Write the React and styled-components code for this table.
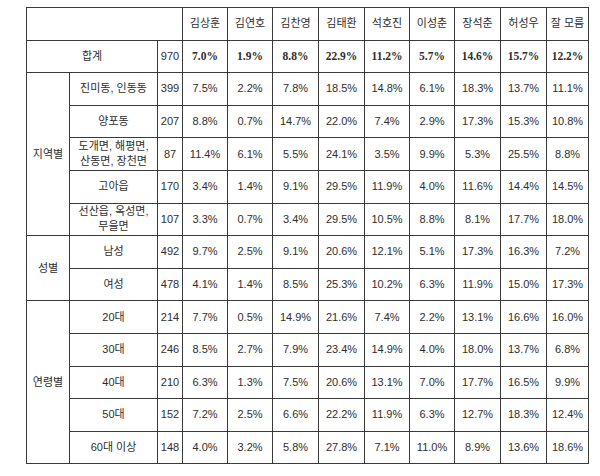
import React from "react";
import styled, { createGlobalStyle } from "styled-components";

const Global = createGlobalStyle`
  html, body { margin: 0; padding: 0; background: #fff; }
  body { font-family: "Liberation Sans", "Noto Sans CJK KR", sans-serif; }
`;

const Page = styled.div`
  width: 600px;
  height: 476px;
  padding: 7px 0 0 26px;
  box-sizing: border-box;
  background: #fff;
`;

const Table = styled.table`
  width: 562px;
  table-layout: fixed;
  border-collapse: collapse;
  color: #2e2e2e;
  font-family: "Liberation Sans", "Noto Sans CJK KR", sans-serif;
  font-size: 11px;
`;

const Cell = styled.td`
  border: 1px solid #3a3a3a;
  height: 31.6px;
  padding: 0;
  text-align: center;
  vertical-align: middle;
  line-height: 15px;
  white-space: nowrap;
  font-weight: ${(p) => (p.$bold ? 700 : 400)};
  font-family: ${(p) =>
    p.$bold
      ? `"Liberation Serif", "Noto Sans CJK KR", serif`
      : `"Liberation Sans", "Noto Sans CJK KR", sans-serif`};
  font-size: ${(p) => (p.$bold ? "11.5px" : "11px")};
`;

const widths = [43, 88, 25, 45, 45, 46, 46, 45, 45, 46, 46, 42];
const names = ["김상훈", "김연호", "김찬영", "김태환", "석호진", "이성춘", "장석춘", "허성우", "잘 모름"];

const groups = [
  {
    label: "지역별",
    rows: [
      ["진미동, 인동동", 399, [7.5, 2.2, 7.8, 18.5, 14.8, 6.1, 18.3, 13.7, 11.1]],
      ["양포동", 207, [8.8, 0.7, 14.7, 22.0, 7.4, 2.9, 17.3, 15.3, 10.8]],
      [["도개면, 해평면,", "산동면, 장천면"], 87, [11.4, 6.1, 5.5, 24.1, 3.5, 9.9, 5.3, 25.5, 8.8]],
      ["고아읍", 170, [3.4, 1.4, 9.1, 29.5, 11.9, 4.0, 11.6, 14.4, 14.5]],
      [["선산읍, 옥성면,", "무을면"], 107, [3.3, 0.7, 3.4, 29.5, 10.5, 8.8, 8.1, 17.7, 18.0]],
    ],
  },
  {
    label: "성별",
    rows: [
      ["남성", 492, [9.7, 2.5, 9.1, 20.6, 12.1, 5.1, 17.3, 16.3, 7.2]],
      ["여성", 478, [4.1, 1.4, 8.5, 25.3, 10.2, 6.3, 11.9, 15.0, 17.3]],
    ],
  },
  {
    label: "연령별",
    rows: [
      ["20대", 214, [7.7, 0.5, 14.9, 21.6, 7.4, 2.2, 13.1, 16.6, 16.0]],
      ["30대", 246, [8.5, 2.7, 7.9, 23.4, 14.9, 4.0, 18.0, 13.7, 6.8]],
      ["40대", 210, [6.3, 1.3, 7.5, 20.6, 13.1, 7.0, 17.7, 16.5, 9.9]],
      ["50대", 152, [7.2, 2.5, 6.6, 22.2, 11.9, 6.3, 12.7, 18.3, 12.4]],
      ["60대 이상", 148, [4.0, 3.2, 5.8, 27.8, 7.1, 11.0, 8.9, 13.6, 18.6]],
    ],
  },
];

const total = [7.0, 1.9, 8.8, 22.9, 11.2, 5.7, 14.6, 15.7, 12.2];
const pct = (v) => `${v.toFixed(1)}%`;

export default function App() {
  return (
    <Page>
      <Global />
      <Table>
        <colgroup>
          {widths.map((w, i) => (
            <col key={i} style={{ width: w }} />
          ))}
        </colgroup>
        <tbody>
          <tr>
            <Cell colSpan={3} />
            {names.map((n) => (
              <Cell key={n}>{n}</Cell>
            ))}
          </tr>
          <tr>
            <Cell colSpan={2}>합계</Cell>
            <Cell>970</Cell>
            {total.map((v, i) => (
              <Cell key={i} $bold>
                {pct(v)}
              </Cell>
            ))}
          </tr>
          {groups.map((g) =>
            g.rows.map(([label, n, vals], ri) => (
              <tr key={g.label + ri}>
                {ri === 0 && <Cell rowSpan={g.rows.length}>{g.label}</Cell>}
                <Cell>
                  {Array.isArray(label) ? (
                    <>
                      {label[0]}
                      <br />
                      {label[1]}
                    </>
                  ) : (
                    label
                  )}
                </Cell>
                <Cell>{n}</Cell>
                {vals.map((v, i) => (
                  <Cell key={i}>{pct(v)}</Cell>
                ))}
              </tr>
            ))
          )}
        </tbody>
      </Table>
    </Page>
  );
}
